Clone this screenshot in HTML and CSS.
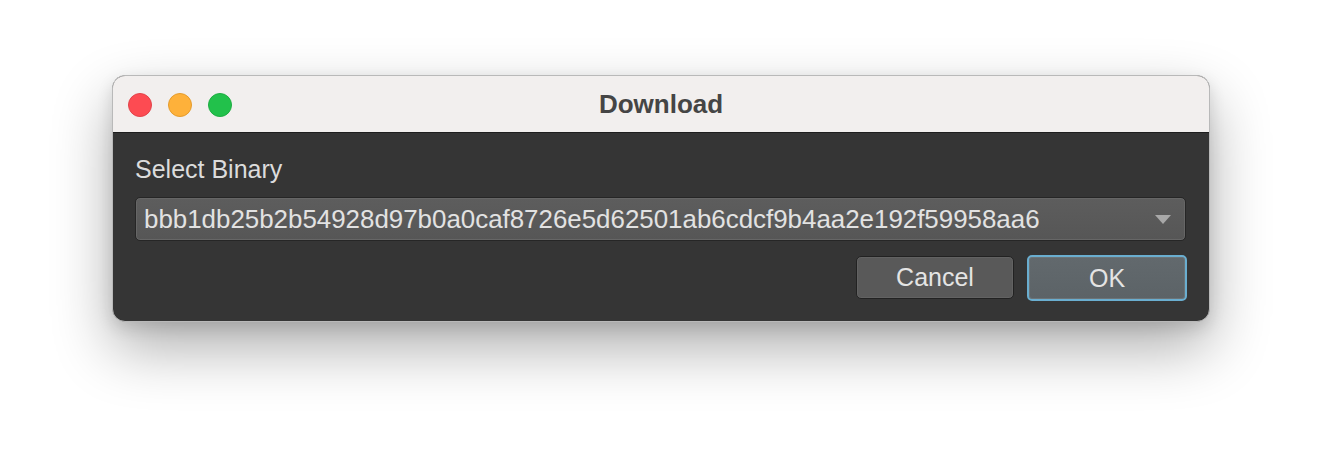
FILE: index.html
```html
<!DOCTYPE html>
<html>
<head>
<meta charset="utf-8">
<link rel="stylesheet" href="styles.css">
</head>
<body>
<div class="window">
  <div class="titlebar">
    <div class="lights">
      <span class="light red"></span>
      <span class="light yellow"></span>
      <span class="light green"></span>
    </div>
    <div class="title">Download</div>
    <div class="spacer"></div>
  </div>
  <div class="content">
    <div class="label">Select Binary</div>
    <div class="combo">
      <span class="combo-text">bbb1db25b2b54928d97b0a0caf8726e5d62501ab6cdcf9b4aa2e192f59958aa6</span>
      <svg class="arrow" width="16" height="9" viewBox="0 0 16 9"><path d="M0 0 H16 L8 9 Z" fill="#a8a8a8"/></svg>
    </div>
    <div class="buttons">
      <button class="btn cancel">Cancel</button>
      <button class="btn ok">OK</button>
    </div>
  </div>
</div>
</body>
</html>
```

FILE: styles.css
```css
html, body {
  margin: 0;
  padding: 0;
  background: #ffffff;
}
body {
  min-height: 470px;
  box-sizing: border-box;
  padding-top: 75px;
  padding-left: 112px;
  font-family: "Liberation Sans", Arial, sans-serif;
}
.window {
  width: 1098px;
  height: 247px;
  box-sizing: border-box;
  border-radius: 13px;
  overflow: hidden;
  background: #353535;
  border: 1px solid #b9b9b9;
  box-shadow: 0 26px 60px rgba(0, 0, 0, 0.32), 0 6px 16px rgba(0, 0, 0, 0.12);
  display: flex;
  flex-direction: column;
}
.titlebar {
  height: 57px;
  box-sizing: border-box;
  background: #f2efee;
  border-bottom: 1px solid #1e1e1e;
  display: grid;
  grid-template-columns: 1fr auto 1fr;
  align-items: center;
}
.lights {
  display: flex;
  gap: 16px;
  padding-left: 15px;
  padding-top: 1px;
}
.light {
  width: 24px;
  height: 24px;
  border-radius: 50%;
  box-sizing: border-box;
}
.red { background: #fd4b52; border: 1px solid #e2434a; }
.yellow { background: #feb13a; border: 1px solid #e59c2d; }
.green { background: #22c14b; border: 1px solid #1ead42; }
.title {
  font-weight: bold;
  font-size: 26px;
  color: #454545;
  padding-top: 0;
}
.content {
  padding: 21px 23px 0 22px;
  display: flex;
  flex-direction: column;
}
.label {
  font-size: 25px;
  line-height: 30px;
  color: #dcdcdc;
  margin-left: 0;
}
.combo {
  margin-top: 13px;
  height: 44px;
  box-sizing: border-box;
  border: 1px solid #262626;
  border-radius: 5px;
  background: linear-gradient(#5d5d5d, #565656);
  box-shadow: inset 0 0 0 1px #666;
  display: flex;
  align-items: center;
  justify-content: space-between;
  padding: 0 14px 0 8px;
}
.combo-text {
  font-size: 25.9px;
  color: #e2e2e2;
  padding-top: 1px;
}
.arrow {
  display: block;
}
.buttons {
  margin-top: 14px;
  display: flex;
  justify-content: flex-end;
  gap: 13px;
}
.btn {
  font-family: "Liberation Sans", Arial, sans-serif;
  font-size: 25px;
  color: #e4e4e4;
  height: 44px;
  box-sizing: border-box;
  border-radius: 5px;
  padding: 0;
}
.cancel {
  width: 158px;
  margin-top: 1px;
  height: 43px;
  border: 1px solid #222;
  background: #595959;
  box-shadow: inset 0 0 0 1px #626262;
}
.ok {
  width: 160px;
  height: 46px;
  border: 2px solid #6aaed0;
  background: linear-gradient(#62696d, #5c6367);
  box-shadow: inset 0 0 0 1px #6c7478;
  margin-right: -1px;
}
```
